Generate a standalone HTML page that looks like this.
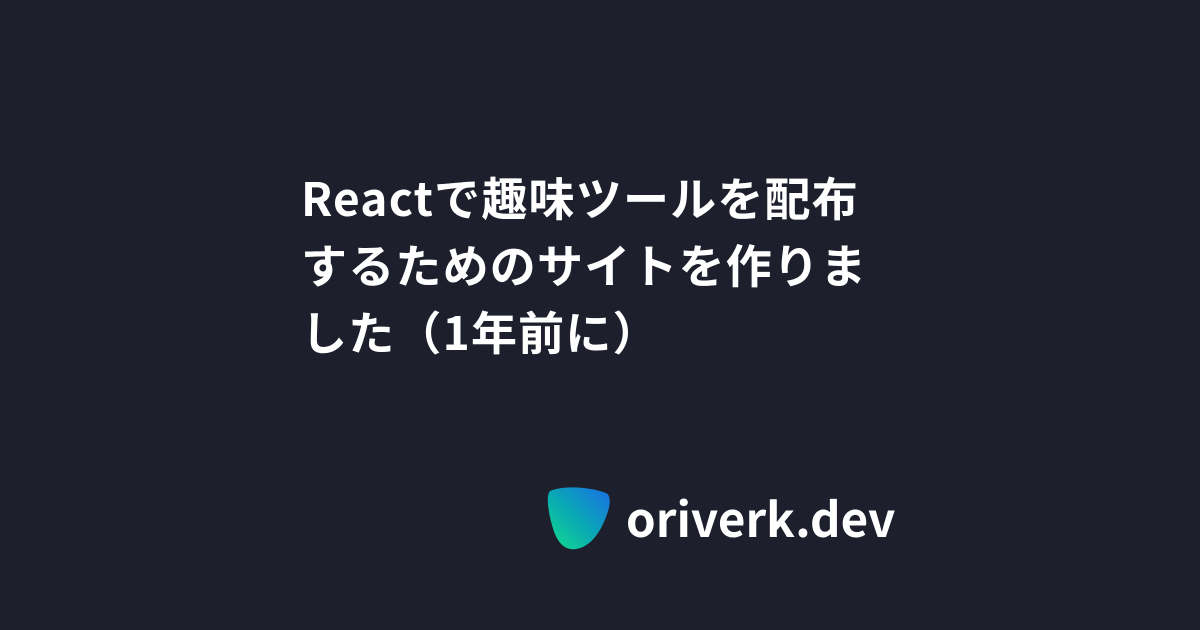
<!DOCTYPE html>
<html><head><meta charset="utf-8"><style>
html,body{margin:0;padding:0}
body{width:1200px;height:630px;background:#1d202c;position:relative;overflow:hidden;font-family:"Liberation Sans","Noto Sans CJK JP",sans-serif;color:#fff}
.t{position:absolute;left:301px;top:164px;font-family:"Noto Sans CJK JP",sans-serif;font-weight:700;font-size:46px;line-height:67px;letter-spacing:1.2px;width:600px}
.logo{position:absolute;left:546px;top:485px}
.d{position:absolute;left:626px;top:484px;font-family:"Noto Sans CJK JP",sans-serif;font-weight:700;font-size:47.5px;line-height:66px;letter-spacing:0}
</style></head><body>
<div class="t">Reactで趣味ツールを配布<br>するためのサイトを作りま<br>した（1年前に）</div>
<svg class="logo" width="66" height="66" viewBox="0 0 66 66">
<defs><linearGradient id="g" x1="1" y1="0" x2="0" y2="1"><stop offset="0" stop-color="#1a6fe6"/><stop offset="0.5" stop-color="#0aa6b6"/><stop offset="1" stop-color="#10e08a"/></linearGradient></defs>
<path d="M4 6 C18 0 44 2 60 8 C66 11 64 22 60 32 C54 48 44 62 30 64 C18 66 10 56 6 40 C2 26 0 10 4 6 Z" fill="url(#g)"/>
</svg>
<div class="d">oriverk.dev</div>
</body></html>
